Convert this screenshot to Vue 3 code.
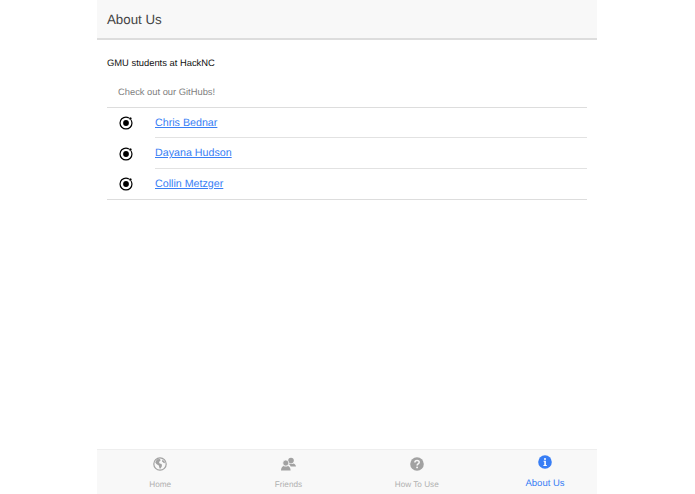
<template>
  <div class="page">
    <div class="phone">
      <header class="top">About Us</header>
      <main class="content">
        <p class="intro">GMU students at HackNC</p>
        <div class="list">
          <div class="list-head">Check out our GitHubs!</div>
          <div v-for="p in people" :key="p" class="item">
            <span class="logo">
              <svg width="14" height="14" viewBox="0 0 15 15">
                <circle cx="7.5" cy="7.5" r="6.4" fill="none" stroke="#000" stroke-width="1.3" />
                <circle cx="7.5" cy="7.5" r="3.1" fill="#000" />
                <circle cx="12.2" cy="2.8" r="1.7" fill="#000" stroke="#fff" stroke-width="0.8" />
              </svg>
            </span>
            <div class="item-body">
              <a href="#" class="link">{{ p }}</a>
            </div>
          </div>
        </div>
      </main>
      <nav class="tabs">
        <div class="tab">
          <svg class="tab-icon" width="14" height="14" viewBox="0 0 14 14">
            <circle cx="7" cy="7" r="6.2" fill="none" stroke="#a2a2a2" stroke-width="1.2" />
            <path d="M4 2.2 L7 2 L7.6 3.6 L6 5 L6.6 6.4 L8.6 7 L9 9 L7.6 11.6 L6.6 11.4 L5.8 8.6 L3.4 7 L2.2 5.2 Z" fill="#a2a2a2" />
            <path d="M9.4 2.6 L11.6 4.4 L12 6.2 L10.4 5.8 L9.2 4.2 Z" fill="#a2a2a2" />
          </svg>
          <span>Home</span>
        </div>
        <div class="tab">
          <svg class="tab-icon" width="15" height="14" viewBox="0 0 15 14">
            <circle cx="10" cy="3.6" r="2.8" fill="#a2a2a2" />
            <path d="M7.2 6.6 C8.6 7.2 11.6 7.2 12.6 6.4 C14 7 14.8 8 15 9.6 L9.6 9.6 C9.4 8.6 8.6 7.6 7.2 6.6 Z" fill="#a2a2a2" />
            <circle cx="4.8" cy="6" r="3" fill="#a2a2a2" stroke="#f8f8f8" stroke-width="0.7" />
            <path d="M0 13.6 C0 10.8 1.2 9.4 2.6 9 C3.8 9.8 5.8 9.8 7 9 C8.4 9.4 9.6 10.8 9.6 13.6 Z" fill="#a2a2a2" />
          </svg>
          <span>Friends</span>
        </div>
        <div class="tab">
          <svg class="tab-icon" width="14" height="14" viewBox="0 0 14 14">
            <circle cx="7" cy="7" r="6.8" fill="#a2a2a2" />
            <path d="M4.9 5.4 C4.9 2.8 9.2 2.8 9.2 5.3 C9.2 6.9 7.1 6.9 7.1 8.4" fill="none" stroke="#f8f8f8" stroke-width="1.5" />
            <circle cx="7.1" cy="10.4" r="0.95" fill="#f8f8f8" />
          </svg>
          <span>How To Use</span>
        </div>
        <div class="tab active">
          <svg class="tab-icon" width="14" height="14" viewBox="0 0 14 14">
            <circle cx="7" cy="7" r="6.8" fill="#387ef5" />
            <circle cx="7" cy="3.9" r="1" fill="#fff" />
            <path d="M5.6 5.8 H7.9 V10 H8.8 V11 H5.4 V10 H6.3 V6.8 H5.6 Z" fill="#fff" />
          </svg>
          <span>About Us</span>
        </div>
      </nav>
    </div>
  </div>
</template>

<script setup>
const people = ['Chris Bednar', 'Dayana Hudson', 'Collin Metzger']
</script>

<style>
html, body {
  margin: 0;
  background: #fff;
}
</style>

<style scoped>
.page {
  display: flex;
  justify-content: center;
  height: 494px;
  overflow: hidden;
  font-family: "Liberation Sans", Arial, sans-serif;
  text-rendering: geometricPrecision;
}

.phone {
  width: 500px;
  margin-left: -1px;
  height: 494px;
  display: flex;
  flex-direction: column;
  background: #fff;
}

.top {
  height: 40px;
  box-sizing: border-box;
  line-height: 39px;
  padding: 0 10px;
  background: #f8f8f8;
  border-bottom: 2px solid #ddd;
  font-size: 13.3px;
  color: #444;
}

.content {
  flex: 1;
  padding: 0 10px;
}

.intro {
  margin: 0;
  padding-top: 17px;
  height: 33px;
  box-sizing: border-box;
  line-height: 12px;
  font-size: 9.4px;
  color: #111;
}

.list-head {
  height: 35px;
  line-height: 38px;
  padding-left: 11px;
  font-size: 9.35px;
  color: #808080;
  border-bottom: 1px solid #ddd;
  box-sizing: border-box;
}

.item {
  display: flex;
  align-items: stretch;
  height: 31px;
}

.list-head + .item {
  height: 30px;
}

.logo {
  width: 48px;
  flex-shrink: 0;
  display: flex;
  align-items: center;
  justify-content: center;
  position: relative;
  left: -5px;
}

.item-body {
  flex: 1;
  display: flex;
  align-items: center;
  border-bottom: 1px solid #e2e2e2;
  box-sizing: border-box;
}

.item:last-child {
  border-bottom: 1px solid #ddd;
  box-sizing: border-box;
}

.item:last-child .item-body {
  border-bottom: none;
}

.link {
  font-size: 10.7px;
  color: #387ef5;
  text-decoration: underline;
}

.tabs {
  height: 45px;
  display: flex;
  background: #f8f8f8;
  border-top: 1px solid #eee;
  box-sizing: border-box;
  overflow: hidden;
}

.tab {
  flex: 0 0 128.3px;
  display: flex;
  flex-direction: column;
  align-items: center;
  padding-top: 7px;
  font-size: 8.2px;
  color: #b0b0b0;
}

.tab:first-child {
  margin-left: -1px;
}

.tab-icon {
  margin-bottom: 8.5px;
}

.tab.active {
  color: #387ef5;
  font-size: 9.5px;
  padding-top: 5px;
}

.tab.active .tab-icon {
  margin-bottom: 9px;
}
</style>
